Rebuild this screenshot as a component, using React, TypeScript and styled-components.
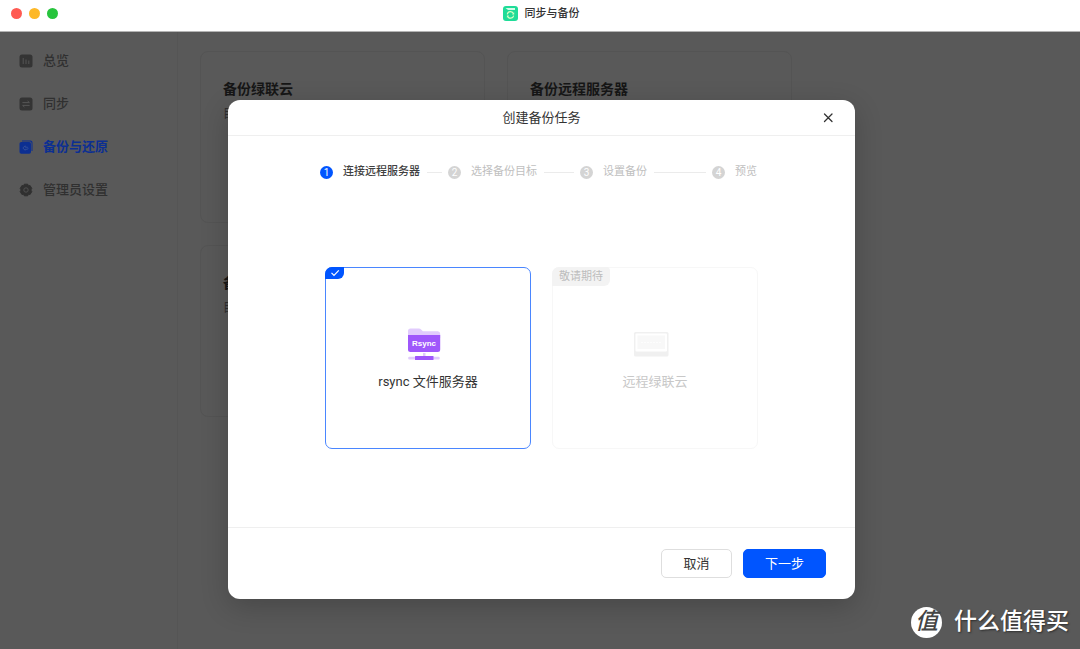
import React from "react";
import styled, { createGlobalStyle } from "styled-components";

const GlobalStyle = createGlobalStyle`
  *, *::before, *::after { box-sizing: border-box; }
  body {
    margin: 0;
    background: #595959;
    color: #333;
    font-family: Roboto, "Noto Sans CJK SC", sans-serif;
    font-size: 13px;
    line-height: 20px;
  }
  h1, h2, p, ol, ul { margin: 0; padding: 0; }
  ol, ul { list-style: none; }
  button { font: inherit; cursor: pointer; }
`;

const Window = styled.div`
  position: relative;
  display: flex;
  flex-direction: column;
  min-height: 100vh;
`;

const TitleBar = styled.header`
  display: grid;
  grid-template-columns: 1fr auto 1fr;
  align-items: center;
  height: 32px;
  padding: 0 9px 4px 11px;
  background: #fff;
  border-bottom: 1px solid #b4b4b4;
`;

const Lights = styled.div`
  display: flex;
  gap: 7px;
`;

const Light = styled.button<{ $color: string }>`
  width: 11px;
  height: 11px;
  padding: 0;
  border: 0;
  border-radius: 50%;
  background: ${(p) => p.$color};
`;

const AppTitle = styled.h1`
  display: flex;
  align-items: center;
  gap: 7px;
  font-size: 11px;
  font-weight: 500;
  color: #333;
`;

const Workspace = styled.div`
  display: flex;
  flex: 1;
`;

const Sidebar = styled.nav`
  flex: 0 0 178px;
  padding-top: 7px;
  border-right: 1px solid #555;
`;

const NavLink = styled.a<{ $active?: boolean }>`
  display: flex;
  align-items: center;
  gap: 10px;
  height: 43px;
  padding-left: 19px;
  color: ${(p) => (p.$active ? "#0c2f92" : "#303030")};
  font-weight: ${(p) => (p.$active ? 700 : 500)};
  text-decoration: none;
`;

const Board = styled.main`
  display: grid;
  flex: 1;
  grid-template-columns: repeat(auto-fill, 285px);
  grid-auto-rows: 172px;
  align-content: start;
  gap: 22px;
  padding: 19px 22px;
`;

const BoardCard = styled.section`
  padding: 26px 22px;
  border: 1px solid #545454;
  border-radius: 8px;
`;

const BoardTitle = styled.h2`
  font-size: 14px;
  font-weight: 700;
  line-height: 22px;
  color: #161616;
`;

const BoardText = styled.p`
  padding-top: 4px;
  font-size: 12px;
  color: #2e2e2e;
`;

const Overlay = styled.div`
  position: absolute;
  inset: 32px 0 0;
  display: flex;
  justify-content: center;
  align-items: flex-start;
  padding: 68px 0 50px 3px;
`;

const Dialog = styled.div`
  width: 627px;
  max-width: 90%;
  background: #fff;
  border-radius: 12px;
  box-shadow: 0 8px 28px rgba(0, 0, 0, 0.2);
`;

const DialogHead = styled.div`
  display: grid;
  grid-template-columns: 1fr auto 1fr;
  align-items: center;
  height: 36px;
  padding: 0 20px;
  border-bottom: 1px solid #efefef;
`;

const DialogTitle = styled.h2`
  grid-column: 2;
  font-size: 13px;
  font-weight: 400;
  color: #333;
`;

const CloseButton = styled.button`
  display: flex;
  justify-self: end;
  padding: 0;
  border: 0;
  background: none;
  color: #333;
`;

const DialogBody = styled.div`
  display: flex;
  flex-direction: column;
  align-items: center;
  gap: 87px;
  padding: 28px 20px 78px;
`;

const Steps = styled.ol`
  display: grid;
  grid-template-columns: 128px 132px 132px auto;
  width: 443px;
  max-width: 100%;
`;

const Step = styled.li<{ $current?: boolean }>`
  display: flex;
  align-items: center;
  gap: 10px;
  height: 16px;
  font-size: 11px;
  line-height: 16px;
  white-space: nowrap;
  color: ${(p) => (p.$current ? "#404040" : "#c0c0c0")};
  font-weight: ${(p) => (p.$current ? 500 : 400)};

  &:not(:last-child)::after {
    content: "";
    flex: 1;
    height: 1px;
    margin: 0 6px 0 -3px;
    background: #ebebeb;
  }
`;

const StepNumber = styled.span<{ $current?: boolean }>`
  flex: none;
  width: 13px;
  height: 13px;
  border-radius: 50%;
  background: ${(p) => (p.$current ? "#0055ff" : "#d4d4d4")};
  color: #fff;
  font-size: 10px;
  font-weight: 400;
  line-height: 13px;
  text-align: center;
`;

const Choices = styled.div`
  display: grid;
  grid-template-columns: repeat(2, 206px);
  gap: 21px;
`;

const Choice = styled.label<{ $selected?: boolean }>`
  position: relative;
  display: flex;
  flex-direction: column;
  align-items: center;
  justify-content: center;
  gap: 10px;
  height: 182px;
  padding-top: 2px;
  border: 1px solid ${(p) => (p.$selected ? "#4a86ff" : "#f7f7f7")};
  border-radius: 7px;
  color: ${(p) => (p.$selected ? "#333" : "#c8c8c8")};
`;

const ChoiceInput = styled.input`
  position: absolute;
  inset: 0;
  margin: 0;
  opacity: 0;
`;

const CheckMark = styled.span`
  position: absolute;
  top: -1px;
  left: -1px;
  display: flex;
  align-items: center;
  justify-content: center;
  width: 19px;
  height: 12px;
  border-radius: 7px 0 6px 0;
  background: #0055ff;
`;

const SoonTag = styled.span`
  position: absolute;
  top: -1px;
  left: -1px;
  padding: 0 7px;
  border-radius: 7px 4px 6px 0;
  background: #f3f3f3;
  color: #bdbdbd;
  font-size: 11px;
  line-height: 19px;
`;

const DialogFoot = styled.div`
  display: flex;
  justify-content: flex-end;
  gap: 11px;
  padding: 21px 29px;
  border-top: 1px solid #efefef;
`;

const ActionButton = styled.button<{ $primary?: boolean }>`
  height: 29px;
  min-width: 71px;
  padding: 0 ${(p) => (p.$primary ? 21 : 20)}px;
  border: 1px solid ${(p) => (p.$primary ? "#0055ff" : "#dedede")};
  border-radius: 5px;
  background: ${(p) => (p.$primary ? "#0055ff" : "#fff")};
  color: ${(p) => (p.$primary ? "#fff" : "#333")};
`;

const Watermark = styled.div`
  position: absolute;
  right: 11px;
  bottom: 11px;
  display: flex;
  align-items: center;
  gap: 12px;
  color: #fff;
  font-size: 23px;
  font-weight: 500;
  line-height: 32px;
  text-shadow: 1px 1px 2px rgba(0, 0, 0, 0.5);
`;

const WatermarkSeal = styled.span`
  width: 31px;
  height: 31px;
  border-radius: 50%;
  background: #fff;
  color: #444;
  font-style: italic;
  line-height: 30px;
  text-align: center;
  text-shadow: none;
`;

const AppIcon = () => (
  <svg width="15" height="15" viewBox="0 0 15 15" aria-hidden="true">
    <rect width="15" height="15" rx="3" fill="#1fdc98" />
    <path d="M2.5 2h9.5v2H5z" fill="#d5fbea" />
    <path d="M4.300 8.300a3.200 3.200 0 0 1 6.200-.600M10.700 9.700a3.200 3.200 0 0 1-6.100.500" fill="none" stroke="#d9ffc0" strokeWidth="1.200" />
    <path d="M11.200 6.200v2.200H9zM3.900 11.800V9.600h2.200z" fill="#d9ffc0" />
  </svg>
);

const OverviewIcon = () => (
  <svg width="14" height="14" viewBox="0 0 14 14" aria-hidden="true">
    <rect x="0.5" y="0.5" width="13" height="13" rx="2.5" fill="#343434" />
    <path d="M4.200 4v6M7 5.500V10M9.800 6.500V10" stroke="#555" strokeWidth="1" />
  </svg>
);

const SyncIcon = () => (
  <svg width="14" height="14" viewBox="0 0 14 14" aria-hidden="true">
    <rect x="0.5" y="0.5" width="13" height="13" rx="2.5" fill="#343434" />
    <path d="M3.400 5.600h7L8.600 4M10.600 8.400h-7l1.800 1.600" fill="none" stroke="#555" strokeWidth="1" />
  </svg>
);

const BackupIcon = () => (
  <svg width="14" height="14" viewBox="0 0 14 14" aria-hidden="true">
    <path d="M3 .500h8.500a2 2 0 0 1 2 2V11h-1V3a1.500 1.500 0 0 0-1.500-1.500H3z" fill="#0c2f92" />
    <rect x="0.500" y="2" width="11.500" height="11.700" rx="1.800" fill="#0c2f92" />
    <path d="M3.800 8l2.400-2.200v1.400h2.200a1.200 1.200 0 0 1 0 2.100H6.200v1z" fill="none" stroke="#3a549b" strokeWidth="0.800" />
  </svg>
);

const SettingsIcon = () => (
  <svg width="14" height="14" viewBox="0 0 14 14" aria-hidden="true">
    <path
      d="M5.300 1.200h3.400l.700 1.500 1.700-.100 1.700 2.800-1 1.600 1 1.600-1.700 2.800-1.700-.100-.700 1.500H5.300l-.700-1.500-1.700.100-1.700-2.800 1-1.600-1-1.600 1.700-2.800 1.700.100z"
      fill="#303030"
      stroke="#303030"
      strokeWidth="1"
      strokeLinejoin="round"
    />
    <circle cx="7" cy="7" r="2.200" fill="none" stroke="#505050" strokeWidth="1" />
  </svg>
);

const CloseIcon = () => (
  <svg width="13" height="13" viewBox="0 0 13 13" aria-hidden="true">
    <path d="M2.500 3l7.500 7.500M10 3l-7.500 7.500" stroke="currentColor" strokeWidth="1.300" strokeLinecap="round" />
  </svg>
);

const CheckIcon = () => (
  <svg width="10" height="8" viewBox="0 0 10 8" aria-hidden="true">
    <path d="M1.500 3.800l2.500 2.500L8.800 1.300" fill="none" stroke="#fff" strokeWidth="1.200" />
  </svg>
);

const RsyncIcon = () => (
  <svg width="44" height="36" viewBox="0 0 44 36" aria-hidden="true">
    <path d="M2 12V5a2.500 2.500 0 0 1 2.500-2.500h8.300c1 0 1.700.3 2.300 1l1.700 1.800h15A2.500 2.500 0 0 1 34.200 7.800V12z" fill="#e1cbfd" />
    <path d="M2 9h32.200v14.500a2.500 2.500 0 0 1-2.500 2.500H4.500A2.500 2.500 0 0 1 2 23.500z" fill="#9f57fb" />
    <text x="18" y="20" textAnchor="middle" fill="#fff" fontFamily="Liberation Sans, sans-serif" fontSize="8" fontWeight="700">Rsync</text>
    <path d="M17 27h2.500v4H17z" fill="#e1cbfd" />
    <rect x="2.200" y="30.700" width="31.500" height="2.800" rx="1" fill="#e1cbfd" />
    <rect x="9" y="30" width="18.500" height="4" rx="0.500" fill="#9f57fb" />
  </svg>
);

const NasIcon = () => (
  <svg width="44" height="36" viewBox="0 0 44 36" aria-hidden="true">
    <rect x="1" y="6" width="34.500" height="24.500" rx="1.500" fill="#f0f0f0" />
    <rect x="2.500" y="7.500" width="31.500" height="18" rx="1" fill="#fff" />
    <rect x="4.500" y="9.500" width="27.500" height="13.500" fill="#f8f8f8" />
    <path d="M8 16.500h21" stroke="#fdfdfd" strokeWidth="1" strokeDasharray="2 1" />
  </svg>
);

const navItems = [
  { label: "总览", Icon: OverviewIcon },
  { label: "同步", Icon: SyncIcon },
  { label: "备份与还原", Icon: BackupIcon, active: true },
  { label: "管理员设置", Icon: SettingsIcon },
];

const boardItems = [
  { title: "备份绿联云", text: "目" },
  { title: "备份远程服务器" },
  { title: "备份", text: "目" },
];

const steps = ["连接远程服务器", "选择备份目标", "设置备份", "预览"];

export default function App() {
  return (
    <>
      <GlobalStyle />
      <Window>
        <TitleBar>
          <Lights>
            <Light $color="#ff5a52" aria-label="关闭窗口" />
            <Light $color="#fdb827" aria-label="最小化" />
            <Light $color="#27c43d" aria-label="全屏" />
          </Lights>
          <AppTitle>
            <AppIcon />
            同步与备份
          </AppTitle>
        </TitleBar>

        <Workspace>
          <Sidebar>
            {navItems.map(({ label, Icon, active }) => (
              <NavLink key={label} href="#" $active={active} aria-current={active ? "page" : undefined}>
                <Icon />
                {label}
              </NavLink>
            ))}
          </Sidebar>
          <Board>
            {boardItems.map(({ title, text }) => (
              <BoardCard key={title}>
                <BoardTitle>{title}</BoardTitle>
                {text && <BoardText>{text}</BoardText>}
              </BoardCard>
            ))}
          </Board>
        </Workspace>

        <Overlay>
          <Dialog role="dialog" aria-modal="true" aria-labelledby="dialog-title">
            <DialogHead>
              <DialogTitle id="dialog-title">创建备份任务</DialogTitle>
              <CloseButton aria-label="关闭">
                <CloseIcon />
              </CloseButton>
            </DialogHead>
            <DialogBody>
              <Steps>
                {steps.map((label, i) => (
                  <Step key={label} $current={i === 0}>
                    <StepNumber $current={i === 0}>{i + 1}</StepNumber>
                    {label}
                  </Step>
                ))}
              </Steps>
              <Choices>
                <Choice $selected>
                  <ChoiceInput type="radio" name="target" defaultChecked />
                  <CheckMark>
                    <CheckIcon />
                  </CheckMark>
                  <RsyncIcon />
                  rsync 文件服务器
                </Choice>
                <Choice>
                  <ChoiceInput type="radio" name="target" disabled />
                  <SoonTag>敬请期待</SoonTag>
                  <NasIcon />
                  远程绿联云
                </Choice>
              </Choices>
            </DialogBody>
            <DialogFoot>
              <ActionButton>取消</ActionButton>
              <ActionButton $primary>下一步</ActionButton>
            </DialogFoot>
          </Dialog>
        </Overlay>

        <Watermark>
          <WatermarkSeal>值</WatermarkSeal>
          什么值得买
        </Watermark>
      </Window>
    </>
  );
}
